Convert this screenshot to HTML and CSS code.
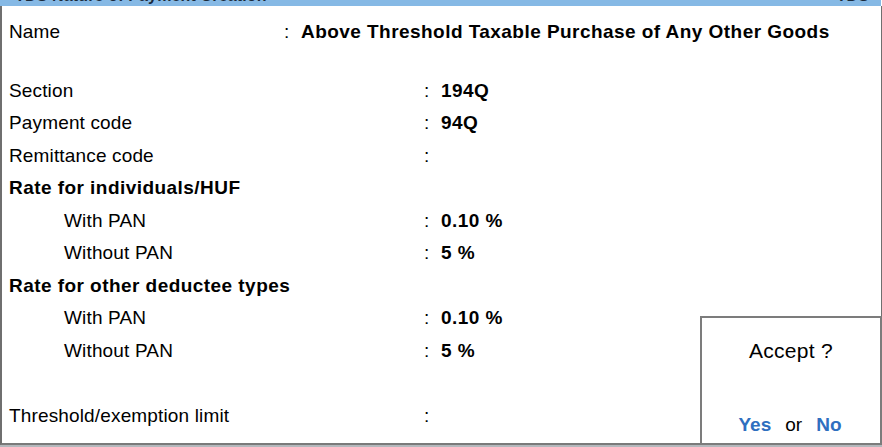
FILE: index.html
```html
<!DOCTYPE html>
<html>
<head>
<meta charset="utf-8">
<link rel="stylesheet" href="styles.css">
</head>
<body>
<div class="window">
  <div class="titlebar">
    <span class="title">TDS Nature of Payment Creation</span>
    <span class="title">TDS</span>
  </div>
  <div class="panel">
    <div class="row name-row">
      <span class="label">Name</span>
      <span class="colon">:</span>
      <span class="value">Above Threshold Taxable Purchase of Any Other Goods</span>
    </div>
    <div class="rows">
      <div class="row"><span class="label">Section</span><span class="colon">:</span><span class="value">194Q</span></div>
      <div class="row"><span class="label">Payment code</span><span class="colon">:</span><span class="value">94Q</span></div>
      <div class="row"><span class="label">Remittance code</span><span class="colon">:</span><span class="value"></span></div>
      <div class="row"><span class="label heading">Rate for individuals/HUF</span></div>
      <div class="row"><span class="label sub">With PAN</span><span class="colon">:</span><span class="value">0.10 %</span></div>
      <div class="row"><span class="label sub">Without PAN</span><span class="colon">:</span><span class="value">5 %</span></div>
      <div class="row"><span class="label heading">Rate for other deductee types</span></div>
      <div class="row"><span class="label sub">With PAN</span><span class="colon">:</span><span class="value">0.10 %</span></div>
      <div class="row"><span class="label sub">Without PAN</span><span class="colon">:</span><span class="value">5 %</span></div>
      <div class="row"></div>
      <div class="row"><span class="label">Threshold/exemption limit</span><span class="colon">:</span><span class="value"></span></div>
    </div>
    <div class="dialog">
      <div class="question">Accept ?</div>
      <div class="answers"><span class="choice">Yes</span><span class="or">or</span><span class="choice">No</span></div>
    </div>
  </div>
  <div class="footer"></div>
</div>
</body>
</html>
```
FILE: styles.css
```css
html, body {
  margin: 0;
  padding: 0;
  background: #ffffff;
}
body {
  font-family: "Liberation Sans", Arial, sans-serif;
  font-size: 19px;
  letter-spacing: 0.15px;
  color: #000000;
  width: 882px;
  height: 447px;
  overflow: hidden;
}
.window {
  display: flex;
  flex-direction: column;
  height: 447px;
}
.titlebar {
  height: 6px;
  background: #86b9e5;
  overflow: hidden;
  display: flex;
  justify-content: space-between;
  padding: 0 12px 0 15px;
  margin-right: 1px;
}
.title {
  font-weight: bold;
  font-size: 16px;
  line-height: 16px;
  margin-top: -12px;
  color: #1a2a3a;
}
.panel {
  position: relative;
  flex: 1;
  border-left: 2px solid #6f6f6f;
  border-right: 1px solid #6f6f6f;
  border-bottom: 2px solid #7a7a7a;
  padding-left: 7px;
}
.row {
  display: grid;
  grid-template-columns: 414px 18px 1fr;
  height: 32.5px;
  line-height: 32.5px;
  white-space: nowrap;
}
.name-row {
  grid-template-columns: 274px 18px 1fr;
  margin-top: 10px;
  margin-bottom: 26px;
}
.rows {
  display: flex;
  flex-direction: column;
}
.value,
.heading {
  font-weight: bold;
  letter-spacing: 0.45px;
}
.sub {
  padding-left: 55px;
}
.colon {
  padding-left: 1px;
}
.dialog {
  position: absolute;
  left: 698px;
  top: 310px;
  right: -1px;
  bottom: -2px;
  border: 2px solid #7c7c7c;
  background: #ffffff;
  display: flex;
  flex-direction: column;
  align-items: center;
  justify-content: space-between;
  padding: 20px 0 6px 0;
}
.question {
  font-size: 21px;
  letter-spacing: 0.3px;
  line-height: 26px;
}
.answers {
  display: flex;
  gap: 14px;
  font-size: 19px;
  letter-spacing: 0;
  line-height: 24px;
  padding-right: 2px;
}
.choice {
  color: #2f6fbf;
  font-weight: bold;
}
.footer {
  height: 2px;
  background: #b4b8bc;
}
```
